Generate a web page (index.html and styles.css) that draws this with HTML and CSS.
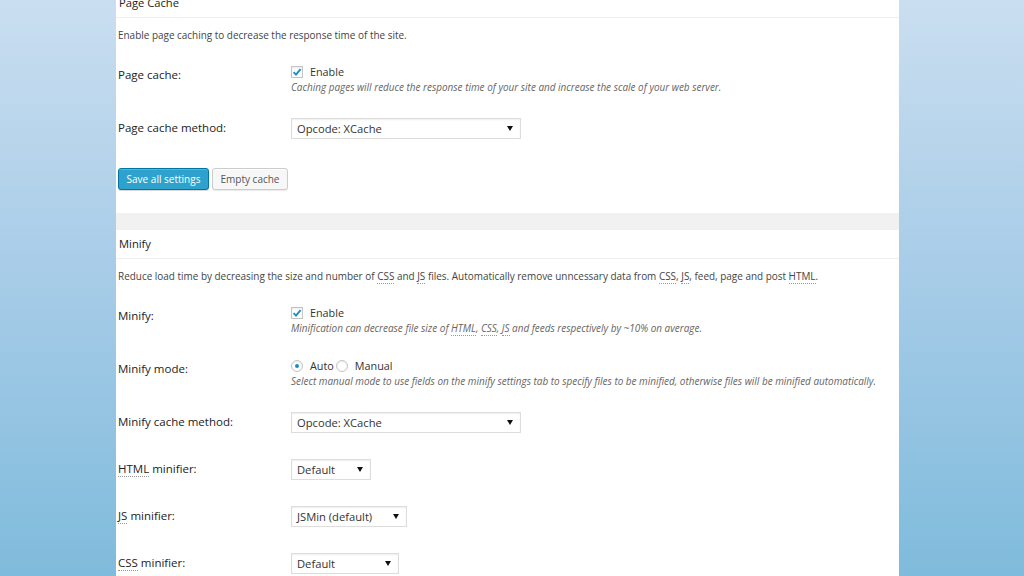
FILE: index.html
```html
<!DOCTYPE html>
<html>
<head>
<meta charset="utf-8">
<link rel="stylesheet" href="styles.css">
</head>
<body>
<div class="panel">
  <section class="section">
    <h3 class="hd">Page Cache</h3>
    <p class="intro">Enable page caching to decrease the response time of the site.</p>
    <div class="row">
      <div class="label">Page cache:</div>
      <div class="ctrl">
        <div class="line"><span class="cb"><svg viewBox="0 0 12 12" width="12" height="12"><path d="M2.6 6.2 L5 8.6 L9.6 3.2" fill="none" stroke="#1e8cbe" stroke-width="1.9"/></svg></span><span class="opt">Enable</span></div>
        <div class="desc">Caching pages will reduce the response time of your site and increase the scale of your web server.</div>
      </div>
    </div>
    <div class="row sel-row">
      <div class="label">Page cache method:</div>
      <div class="ctrl"><div class="select w-wide"><span>Opcode: XCache</span><i class="arr"></i></div></div>
    </div>
    <div class="buttons">
      <button class="btn primary">Save all settings</button>
      <button class="btn">Empty cache</button>
    </div>
  </section>
  <div class="band"></div>
  <section class="section">
    <h3 class="hd">Minify</h3>
    <p class="intro">Reduce load time by decreasing the size and number of <abbr>CSS</abbr> and <abbr>JS</abbr> files. Automatically remove unncessary data from <abbr>CSS</abbr>, <abbr>JS</abbr>, feed, page and post <abbr>HTML</abbr>.</p>
    <div class="row">
      <div class="label">Minify:</div>
      <div class="ctrl">
        <div class="line"><span class="cb"><svg viewBox="0 0 12 12" width="12" height="12"><path d="M2.6 6.2 L5 8.6 L9.6 3.2" fill="none" stroke="#1e8cbe" stroke-width="1.9"/></svg></span><span class="opt">Enable</span></div>
        <div class="desc">Minification can decrease file size of <abbr>HTML</abbr>, <abbr>CSS</abbr>, <abbr>JS</abbr> and feeds respectively by ~10% on average.</div>
      </div>
    </div>
    <div class="row">
      <div class="label">Minify mode:</div>
      <div class="ctrl">
        <div class="line"><span class="rb on"></span><span class="opt">Auto</span><span class="rb"></span><span class="opt">Manual</span></div>
        <div class="desc">Select manual mode to use fields on the minify settings tab to specify files to be minified, otherwise files will be minified automatically.</div>
      </div>
    </div>
    <div class="row sel-row">
      <div class="label">Minify cache method:</div>
      <div class="ctrl"><div class="select w-wide"><span>Opcode: XCache</span><i class="arr"></i></div></div>
    </div>
    <div class="row sel-row gap26">
      <div class="label"><abbr>HTML</abbr> minifier:</div>
      <div class="ctrl"><div class="select w-html"><span>Default</span><i class="arr"></i></div></div>
    </div>
    <div class="row sel-row gap26">
      <div class="label"><abbr>JS</abbr> minifier:</div>
      <div class="ctrl"><div class="select w-js"><span>JSMin (default)</span><i class="arr"></i></div></div>
    </div>
    <div class="row sel-row gap26">
      <div class="label"><abbr>CSS</abbr> minifier:</div>
      <div class="ctrl"><div class="select w-css"><span>Default</span><i class="arr"></i></div></div>
    </div>
  </section>
</div>
</body>
</html>
```

FILE: styles.css
```css
html, body {
  margin: 0;
  padding: 0;
  height: 576px;
  overflow: hidden;
}
body {
  background: linear-gradient(to bottom, #cadef0 0%, #a9cde8 45%, #7fbbdc 100%);
  font-family: "Open Sans", "DejaVu Sans", sans-serif;
  color: #333;
}
.panel {
  margin-left: 116px;
  width: 783px;
  height: 600px;
  margin-top: -10px;
  background: #fff;
}
.section {
  padding: 0 0 23px 0;
}
.hd {
  margin: 0;
  padding: 6px 0 7px 3px;
  line-height: 14px;
  font-size: 11.2px;
  font-weight: 400;
  color: #222;
  border-bottom: 1px solid #eeeeee;
}
.section + .band + .section .hd {
  padding-top: 7px;
}
.intro {
  margin: 10px 0 0 2px;
  line-height: 14px;
  font-size: 9.95px;
  color: #444;
}
abbr {
  text-decoration: none;
  border-bottom: 1px dotted #999;
}
.row {
  display: flex;
  margin-top: 23px;
  padding-left: 2px;
}
.row + .row { margin-top: 24px; }
.row.gap26 { margin-top: 26px; }
.label {
  width: 173px;
  flex: none;
  padding-top: 3px;
  line-height: 14px;
  font-size: 11.5px;
  color: #222;
}
.ctrl {
  flex: 1;
}
.line {
  display: flex;
  align-items: center;
  height: 14px;
  line-height: 14px;
}
.cb {
  width: 12px;
  height: 12px;
  box-sizing: border-box;
  border: 1px solid #c4c4c4;
  box-shadow: inset 0 1px 2px rgba(0,0,0,.08);
  background: #fff;
  display: inline-flex;
  align-items: center;
  justify-content: center;
}
.cb svg { flex: none; }
.rb {
  width: 12px;
  height: 12px;
  box-sizing: border-box;
  border: 1px solid #c4c4c4;
  border-radius: 50%;
  background: #fff;
  box-shadow: inset 0 1px 2px rgba(0,0,0,.08);
  display: inline-flex;
  align-items: center;
  justify-content: center;
}
.rb.on::after {
  content: "";
  width: 4px;
  height: 4px;
  border-radius: 50%;
  background: #1e8cbe;
}
.opt {
  font-size: 10.8px;
  color: #333;
  margin-left: 7px;
  margin-right: 2px;
}
.desc {
  margin-top: 1px;
  line-height: 14px;
  font-size: 9.95px;
  font-style: italic;
  color: #666;
}
.select {
  height: 21px;
  box-sizing: border-box;
  border: 1px solid #ddd;
  box-shadow: inset 0 1px 2px rgba(0,0,0,.07);
  background: #fff;
  display: flex;
  align-items: center;
  justify-content: space-between;
  padding: 0 7px 0 5px;
  font-size: 11.2px;
  color: #333;
}
.arr {
  width: 0;
  height: 0;
  border-left: 3px solid transparent;
  border-right: 3px solid transparent;
  border-top: 5px solid #111;
}
.w-wide { width: 230px; }
.w-html { width: 80px; }
.w-js { width: 116px; }
.w-css { width: 108px; }
.buttons {
  display: flex;
  gap: 3px;
  margin-top: 29px;
  padding-left: 2px;
}
.btn {
  height: 22px;
  box-sizing: border-box;
  font-family: "Open Sans", "DejaVu Sans", sans-serif;
  font-size: 10px;
  padding: 0 4px;
  border-radius: 3px;
  border: 1px solid #ccc;
  background: #f7f7f7;
  color: #555;
  box-shadow: inset 0 1px 0 #fff, 0 1px 0 rgba(0,0,0,.08);
}
.btn.primary {
  width: 91px;
  background: #2ea2cc;
  border-color: #0074a2;
  color: #fff;
  box-shadow: inset 0 1px 0 rgba(120,200,230,.5), 0 1px 0 rgba(0,0,0,.15);
}
.btn:not(.primary) { width: 76px; }
.band {
  height: 17px;
  background: #f1f1f1;
}
```
